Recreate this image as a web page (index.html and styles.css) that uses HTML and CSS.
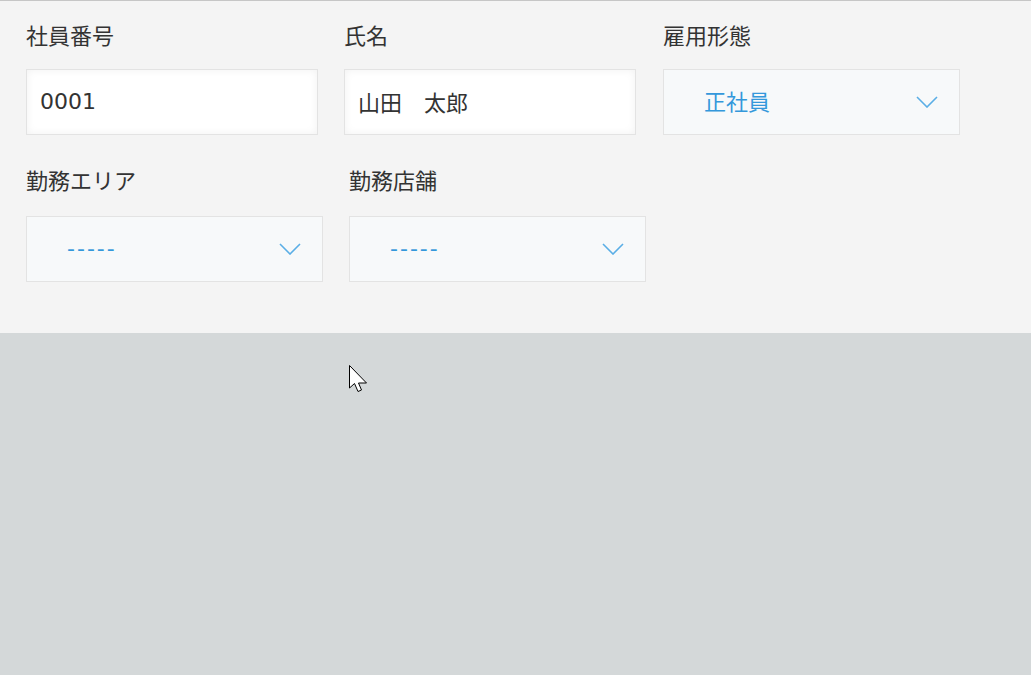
FILE: index.html
```html
<!DOCTYPE html>
<html lang="ja">
<head>
    <meta charset="UTF-8">
    <meta name="viewport" content="width=device-width, initial-scale=1.0">
    <title>社員情報</title>
    <link rel="stylesheet" href="styles.css">
</head>
<body>
    <div class="panel">
        <!-- Row 1 -->
        <div class="row">
            <div class="field">
                <label class="field-label" for="emp_no">社員番号</label>
                <input class="text-input" type="text" id="emp_no" value="0001">
            </div>
            <div class="field">
                <label class="field-label" for="emp_name">氏名</label>
                <input class="text-input" type="text" id="emp_name" value="山田　太郎">
            </div>
            <div class="field field-select">
                <div class="field-label">雇用形態</div>
                <div class="select-box">
                    <span class="select-value">正社員</span>
                    <svg class="chevron" width="22" height="12" viewBox="0 0 22 12"><polyline points="1,1 11,11 21,1" fill="none" stroke="#5aaee6" stroke-width="1.6"/></svg>
                </div>
            </div>
        </div>

        <!-- Row 2 -->
        <div class="row">
            <div class="field field-select">
                <div class="field-label">勤務エリア</div>
                <div class="select-box">
                    <span class="select-value empty">-----</span>
                    <svg class="chevron" width="22" height="12" viewBox="0 0 22 12"><polyline points="1,1 11,11 21,1" fill="none" stroke="#5aaee6" stroke-width="1.6"/></svg>
                </div>
            </div>
            <div class="field field-select">
                <div class="field-label">勤務店舗</div>
                <div class="select-box">
                    <span class="select-value empty">-----</span>
                    <svg class="chevron" width="22" height="12" viewBox="0 0 22 12"><polyline points="1,1 11,11 21,1" fill="none" stroke="#5aaee6" stroke-width="1.6"/></svg>
                </div>
            </div>
        </div>
    </div>

    <!-- Mouse pointer -->
    <svg class="cursor" width="19" height="28" viewBox="0 0 19 28">
        <path d="M0.5 0.5 L0.5 23 L5.5 18.5 L9 26.5 L12.5 25 L9.5 18 L17.5 18 Z" fill="#fff" stroke="#000" stroke-width="1"/>
    </svg>
</body>
</html>
```

FILE: styles.css
```css
/* Page */
body {
    margin: 0;
    background-color: #d4d8d9;
    font-family: "DejaVu Sans", "Noto Sans CJK JP", sans-serif;
    color: #333;
    position: relative;
    min-height: 675px;
}

/* Form panel */
.panel {
    background-color: #f4f4f4;
    border-top: 1px solid #c6c6c6;
    padding: 18px 26px 51px;
}

.row {
    display: flex;
    gap: 26px;
}

.row + .row {
    margin-top: 29px;
}

.field {
    display: flex;
    flex-direction: column;
}

.field-label {
    display: block;
    font-family: "Noto Sans CJK JP", sans-serif;
    font-size: 22px;
    line-height: 30px;
    height: 30px;
    margin-bottom: 20px;
    color: #333;
}

.row + .row .field-label {
    margin-bottom: 22px;
}

/* Text inputs */
.text-input {
    box-sizing: border-box;
    width: 292px;
    height: 66px;
    margin: 0;
    padding: 0 13px 2px;
    border: 1px solid #e3e3e3;
    background-color: #fff;
    box-shadow: inset 0 0 8px rgba(0, 0, 0, 0.06);
    font-family: inherit;
    font-size: 22px;
    color: #333;
    outline: none;
}

/* Drop-down boxes */
.select-box {
    box-sizing: border-box;
    width: 297px;
    height: 66px;
    display: flex;
    align-items: center;
    justify-content: space-between;
    padding: 0 21px 0 40px;
    border: 1px solid #e3e3e3;
    background-color: #f7f9fa;
}

.row:first-child .field-select {
    margin-left: 1px;
}

.select-value {
    font-family: "Noto Sans CJK JP", sans-serif;
    font-size: 22px;
    line-height: 26px;
    margin-bottom: 4px;
    color: #3498db;
}

.select-value.empty {
    font-family: "DejaVu Sans", sans-serif;
    letter-spacing: 2px;
    margin-bottom: 0;
}

.chevron {
    display: block;
}

.cursor {
    position: absolute;
    left: 349px;
    top: 365px;
}
```
